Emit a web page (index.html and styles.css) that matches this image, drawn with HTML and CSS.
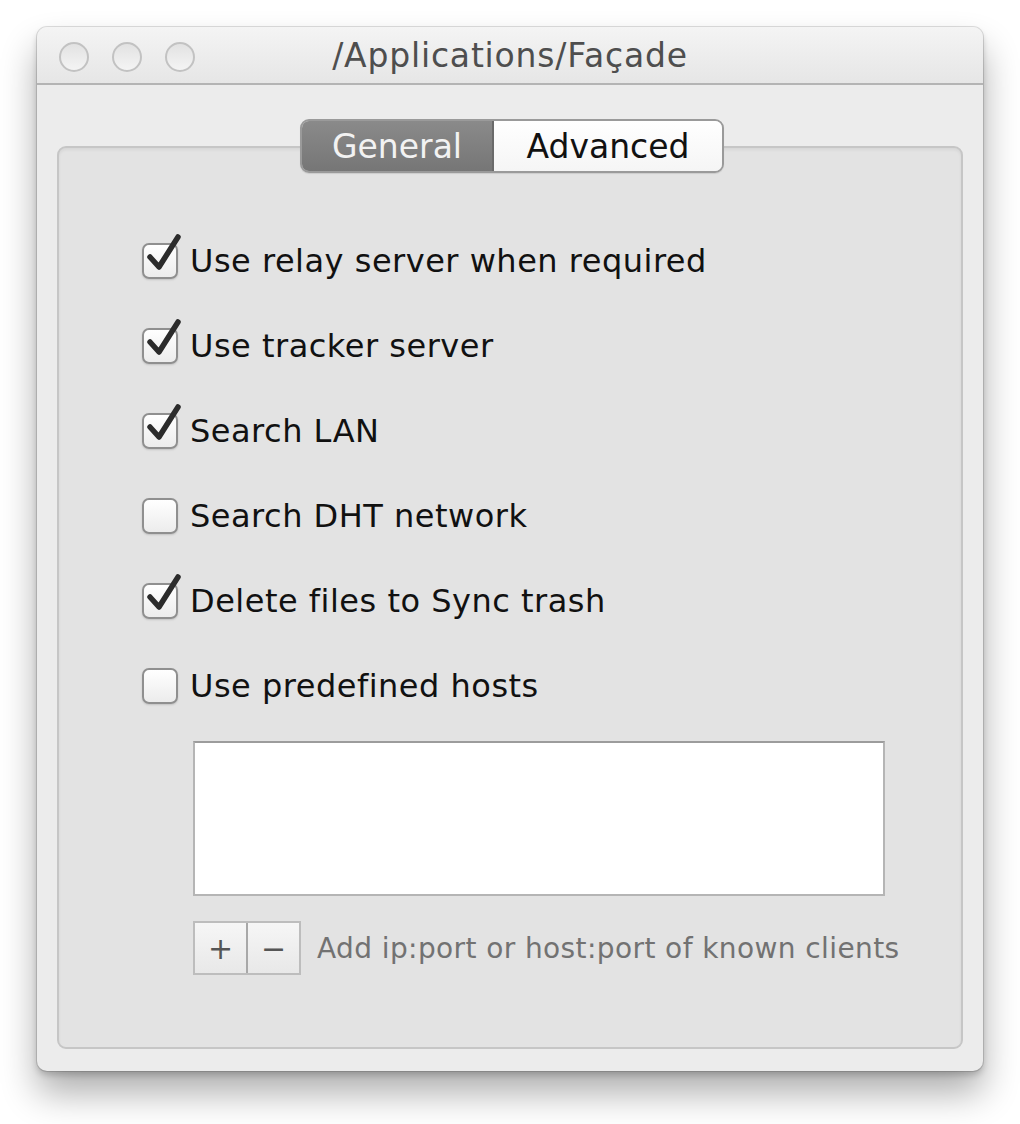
FILE: index.html
```html
<!DOCTYPE html>
<html>
<head>
<meta charset="utf-8">
<link rel="stylesheet" href="styles.css">
</head>
<body>
<div class="window">
  <div class="titlebar">
    <div class="lights">
      <span class="light"></span><span class="light"></span><span class="light"></span>
    </div>
    <div class="title">/Applications/Façade</div>
  </div>
  <div class="content">
    <div class="panel">
      <div class="tabs">
        <div class="tab active">General</div>
        <div class="tab">Advanced</div>
      </div>
      <div class="options">
        <label class="opt"><span class="box checked"><svg viewBox="0 0 40 44"><path d="M6 24 L15 34 L34 4" /></svg></span><span>Use relay server when required</span></label>
        <label class="opt"><span class="box checked"><svg viewBox="0 0 40 44"><path d="M6 24 L15 34 L34 4" /></svg></span><span>Use tracker server</span></label>
        <label class="opt"><span class="box checked"><svg viewBox="0 0 40 44"><path d="M6 24 L15 34 L34 4" /></svg></span><span>Search LAN</span></label>
        <label class="opt"><span class="box"></span><span>Search DHT network</span></label>
        <label class="opt"><span class="box checked"><svg viewBox="0 0 40 44"><path d="M6 24 L15 34 L34 4" /></svg></span><span>Delete files to Sync trash</span></label>
        <label class="opt"><span class="box"></span><span>Use predefined hosts</span></label>
      </div>
      <div class="hosts">
        <div class="textarea"></div>
        <div class="controls">
          <div class="btns"><span class="btn">+</span><span class="btn">−</span></div>
          <span class="hint">Add ip:port or host:port of known clients</span>
        </div>
      </div>
    </div>
  </div>
</div>
</body>
</html>
```
FILE: styles.css
```css
html, body {
  margin: 0;
  padding: 0;
  background: #ffffff;
}
body {
  font-family: "DejaVu Sans", "Liberation Sans", sans-serif;
  padding: 27px 0 53px 37px;
}
.window {
  width: 946px;
  height: 1044px;
  background: #ececec;
  border-radius: 10px;
  box-shadow: 0 0 0 1px rgba(0,0,0,0.12), 0 4px 6px rgba(0,0,0,0.18), 0 22px 36px rgba(0,0,0,0.32);
  display: flex;
  flex-direction: column;
  overflow: hidden;
}
.titlebar {
  height: 56px;
  background: linear-gradient(#f4f4f4, #e6e6e6);
  border-bottom: 2px solid #b4b4b4;
  display: flex;
  align-items: center;
  position: relative;
}
.lights {
  display: flex;
  gap: 23px;
  padding-left: 22px;
  padding-top: 4px;
}
.light {
  width: 30px;
  height: 30px;
  border-radius: 50%;
  border: 2px solid #c2c2c2;
  box-sizing: border-box;
  background: linear-gradient(#e2e2e2, #f4f4f4);
}
.title {
  position: absolute;
  left: 0;
  right: 0;
  text-align: center;
  font-size: 33px;
  letter-spacing: 0.8px;
  color: #4e4e4e;
  top: 9px;
}
.content {
  flex: 1;
  padding: 61px 20px 22px 20px;
  display: flex;
}
.panel {
  flex: 1;
  background: #e3e3e3;
  border: 2px solid #c6c6c6;
  border-radius: 9px;
  position: relative;
  display: flex;
  flex-direction: column;
  box-shadow: inset 0 2px 3px rgba(0,0,0,0.06);
}
.tabs {
  position: absolute;
  top: -29px;
  left: 241px;
  display: flex;
  height: 54px;
  border: 2px solid #9a9a9a;
  border-radius: 9px;
  overflow: hidden;
  box-sizing: border-box;
  box-shadow: 0 1px 1px rgba(0,0,0,0.1);
}
.tab {
  display: flex;
  align-items: center;
  justify-content: center;
  font-size: 33px;
  color: #111;
  background: linear-gradient(#ffffff, #f5f5f5);
  width: 228px;
}
.tab.active {
  width: 190px;
  background: linear-gradient(#8a8a8a, #767676);
  color: #f2f2f2;
  border-right: 2px solid #6a6a6a;
}
.options {
  display: flex;
  flex-direction: column;
  gap: 47px;
  padding: 94px 0 0 83px;
}
.opt {
  display: flex;
  align-items: center;
  gap: 12px;
  height: 38px;
  font-size: 32px;
  letter-spacing: 0.5px;
  color: #111;
}
.box {
  width: 36px;
  height: 36px;
  box-sizing: border-box;
  border: 2px solid #8f8f8f;
  border-radius: 7px;
  background: linear-gradient(#ffffff, #ececec);
  box-shadow: 0 1px 2px rgba(0,0,0,0.15);
  position: relative;
  flex: none;
}
.box svg {
  position: absolute;
  left: 0;
  top: -12px;
  width: 40px;
  height: 44px;
}
.box svg path {
  fill: none;
  stroke: #2b2b2b;
  stroke-width: 5.5;
  stroke-linecap: round;
  stroke-linejoin: round;
}
.hosts {
  padding: 36px 0 0 134px;
  display: flex;
  flex-direction: column;
}
.textarea {
  width: 692px;
  height: 155px;
  box-sizing: border-box;
  background: #ffffff;
  border: 2px solid #b5b5b5;
  border-top-color: #9c9c9c;
}
.controls {
  display: flex;
  align-items: center;
  margin-top: 25px;
  gap: 16px;
}
.btns {
  display: flex;
  border: 2px solid #bdbdbd;
  height: 54px;
  box-sizing: border-box;
}
.btn {
  width: 51px;
  display: flex;
  align-items: center;
  justify-content: center;
  font-size: 30px;
  color: #555;
  background: linear-gradient(#f6f6f6, #e8e8e8);
}
.btn + .btn {
  border-left: 2px solid #a8a8a8;
}
.hint {
  font-size: 28px;
  letter-spacing: 0.4px;
  color: #727272;
}
```
